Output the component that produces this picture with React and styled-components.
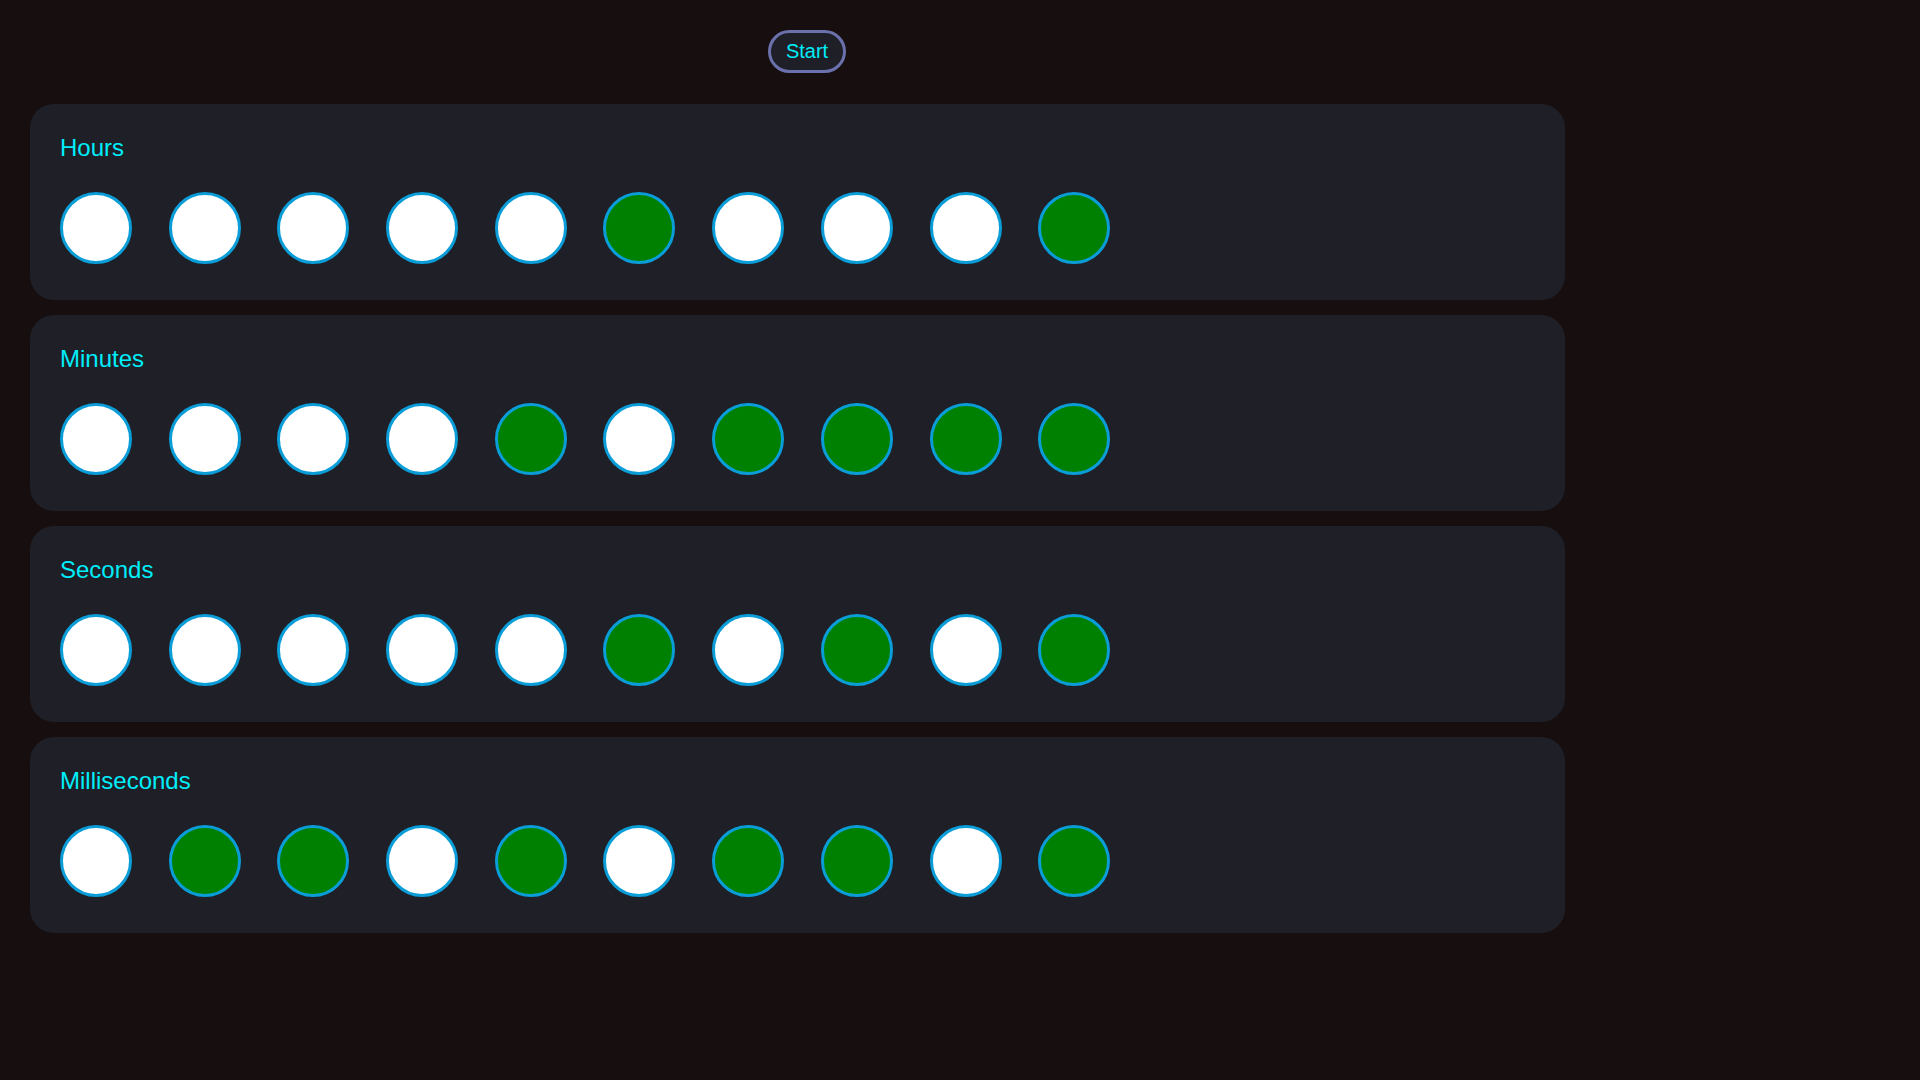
import React from 'react';
import styled, { createGlobalStyle } from 'styled-components';

const GlobalStyle = createGlobalStyle`
  html, body {
    margin: 0;
    padding: 0;
    background-color: #170f0f;
  }
  body {
    font-family: 'Liberation Sans', Arial, sans-serif;
  }
`;

const Page = styled.div`
  padding: 30px 0 0 30px;
  min-height: 1050px;
`;

const Header = styled.div`
  display: flex;
  justify-content: center;
  width: 1554px;
  margin-bottom: 31px;
`;

const StartButton = styled.button`
  box-sizing: border-box;
  width: 78px;
  height: 43px;
  border: 3px solid #6b71ad;
  border-radius: 22px;
  background-color: #1e1f27;
  color: #00eefa;
  font-family: 'Liberation Sans', Arial, sans-serif;
  font-size: 20px;
  padding: 0;
  cursor: pointer;
`;

const Panel = styled.section`
  box-sizing: border-box;
  width: 1535px;
  height: 196px;
  margin-bottom: 15px;
  padding: 30px 30px 36px;
  border-radius: 24px;
  background-color: #1e1f27;
`;

const Title = styled.h2`
  margin: 0 0 30px;
  font-size: 24px;
  font-weight: 400;
  line-height: 28px;
  color: #00eefa;
`;

const Row = styled.div`
  display: flex;
  gap: 36.7px;
`;

const Bulb = styled.div`
  box-sizing: border-box;
  width: 72px;
  height: 72px;
  border-radius: 50%;
  border: 3px solid #0a9dd8;
  background-color: ${props => (props.on ? '#008000' : '#ffffff')};
`;

const UNITS = [
  { label: 'Hours', value: 17 },
  { label: 'Minutes', value: 47 },
  { label: 'Seconds', value: 21 },
  { label: 'Milliseconds', value: 429 },
];

const toBits = (n) => n.toString(2).padStart(10, '0').split('').map(b => b === '1');

export default function App() {
  return (
    <>
      <GlobalStyle />
      <Page>
        <Header>
          <StartButton>Start</StartButton>
        </Header>
        {UNITS.map(({ label, value }) => (
          <Panel key={label}>
            <Title>{label}</Title>
            <Row>
              {toBits(value).map((on, i) => (
                <Bulb key={i} on={on} />
              ))}
            </Row>
          </Panel>
        ))}
      </Page>
    </>
  );
}
